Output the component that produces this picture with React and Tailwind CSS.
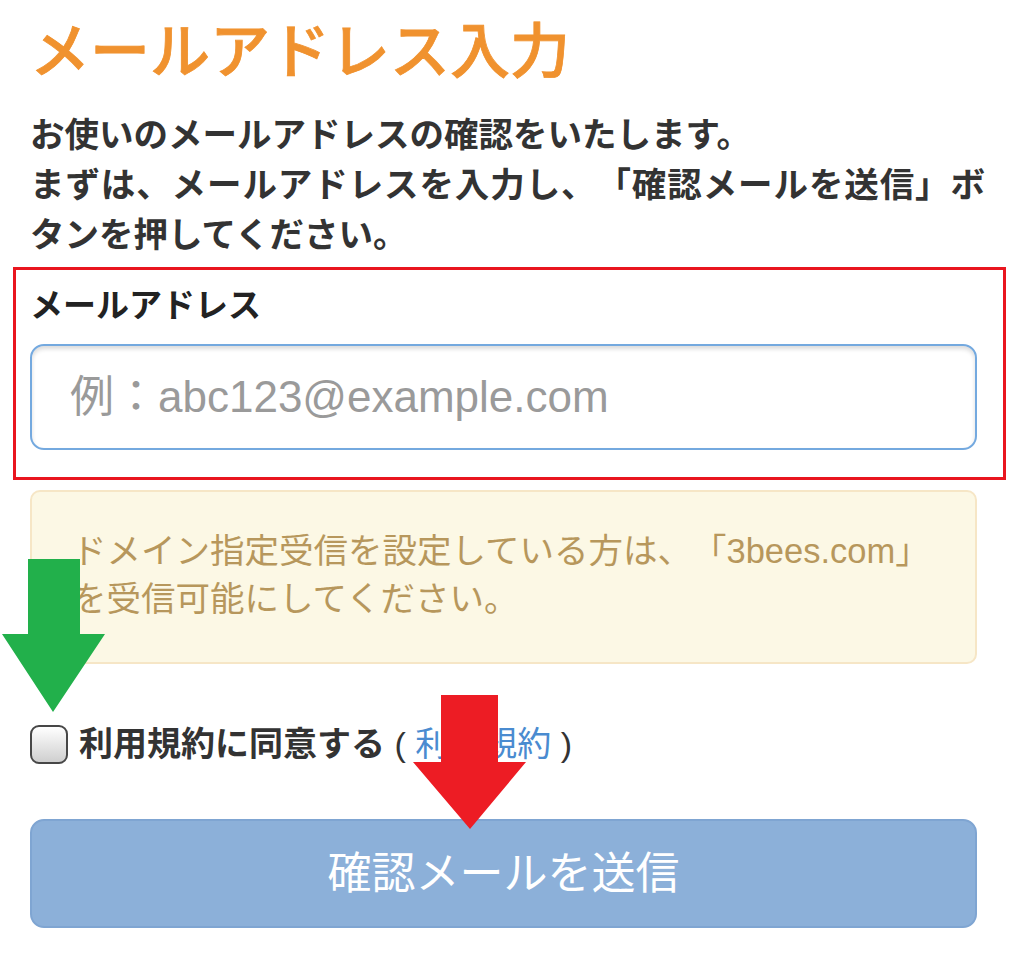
import React from "react";

const FONT = { fontFamily: '"Liberation Sans", "Noto Sans CJK JP", sans-serif' };

export default function App() {
  return (
    <div className="relative w-full min-h-[970px] bg-white px-[30px] pt-[17px] [text-spacing-trim:space-all]" style={FONT}>
      <h1 className="text-[60px] leading-[72px] font-medium text-[#F0922F] [-webkit-text-stroke:0.8px_#F0922F]">メールアドレス入力</h1>

      <p className="mt-[21px] text-[34.5px] leading-[50px] font-bold text-[#333333] text-justify">
        お使いのメールアドレスの確認をいたします。
        <br />
        まずは、メールアドレスを入力し、「確認メールを送信」ボタンを押してください。
      </p>

      <div className="mt-[7px] ml-[-17px] mr-[-21px] border-[3px] border-[#E9161F] pl-[14px] pr-[26px] pt-[16px] pb-[27px]">
        <label className="block text-[33px] leading-[40px] font-bold text-[#222222]">メールアドレス</label>
        <input
          type="email"
          placeholder="例：abc123@example.com"
          className="mt-[18px] block w-full h-[106px] rounded-[14px] border-2 border-[#74A9DF] bg-white pl-[38px] pr-4 text-[44px] text-[#333] placeholder:text-[#9A9A9A] shadow-[inset_0_3px_4px_rgba(0,0,0,0.14)] outline-none [text-spacing-trim:space-all]"
          style={FONT}
        />
      </div>

      <div className="mt-[10px] mr-[8px] rounded-[10px] border-2 border-[#F6E6C6] bg-[#FCF8E5] pl-[40px] pr-[38px] pt-[35px] pb-[39px] text-[34.5px] leading-[48px] text-[#B7975C]">
        ドメイン指定受信を設定している方は、「3bees.com」を受信可能にしてください。
      </div>

      <div className="mt-[55px] flex h-[50px] items-center">
        <input
          type="checkbox"
          className="appearance-none m-0 w-[38px] h-[39px] shrink-0 rounded-[9px] border-[2.5px] border-[#474747] bg-gradient-to-b from-white to-[#CFCFCF]"
        />
        <span className="ml-[11px] text-[34px] leading-[50px] text-[#333333] whitespace-nowrap">
          <span className="font-bold">利用規約に同意する</span>
          {" ( "}
          <a className="text-[#4A8BD0]">利用規約</a>
          {" )"}
        </span>
      </div>

      <button
        type="button"
        className="mt-[50px] mr-[8px] flex h-[109px] w-[947px] items-center justify-center rounded-[14px] border-2 border-[#7FA5D2] bg-[#8CB0D9] text-[44px] text-white"
        style={FONT}
      >
        確認メールを送信
      </button>

      <svg className="absolute left-0 top-[559px]" width="110" height="155" viewBox="0 0 110 155">
        <polygon points="28,0 80,0 80,75 105,75 53,153 2,75 28,75" fill="#22B04B" />
      </svg>

      <svg className="absolute left-[410px] top-[695px]" width="120" height="136" viewBox="0 0 120 136">
        <polygon points="31,0 88,0 88,67 116,67 60,134 3,67 31,67" fill="#ED1C24" />
      </svg>
    </div>
  );
}
